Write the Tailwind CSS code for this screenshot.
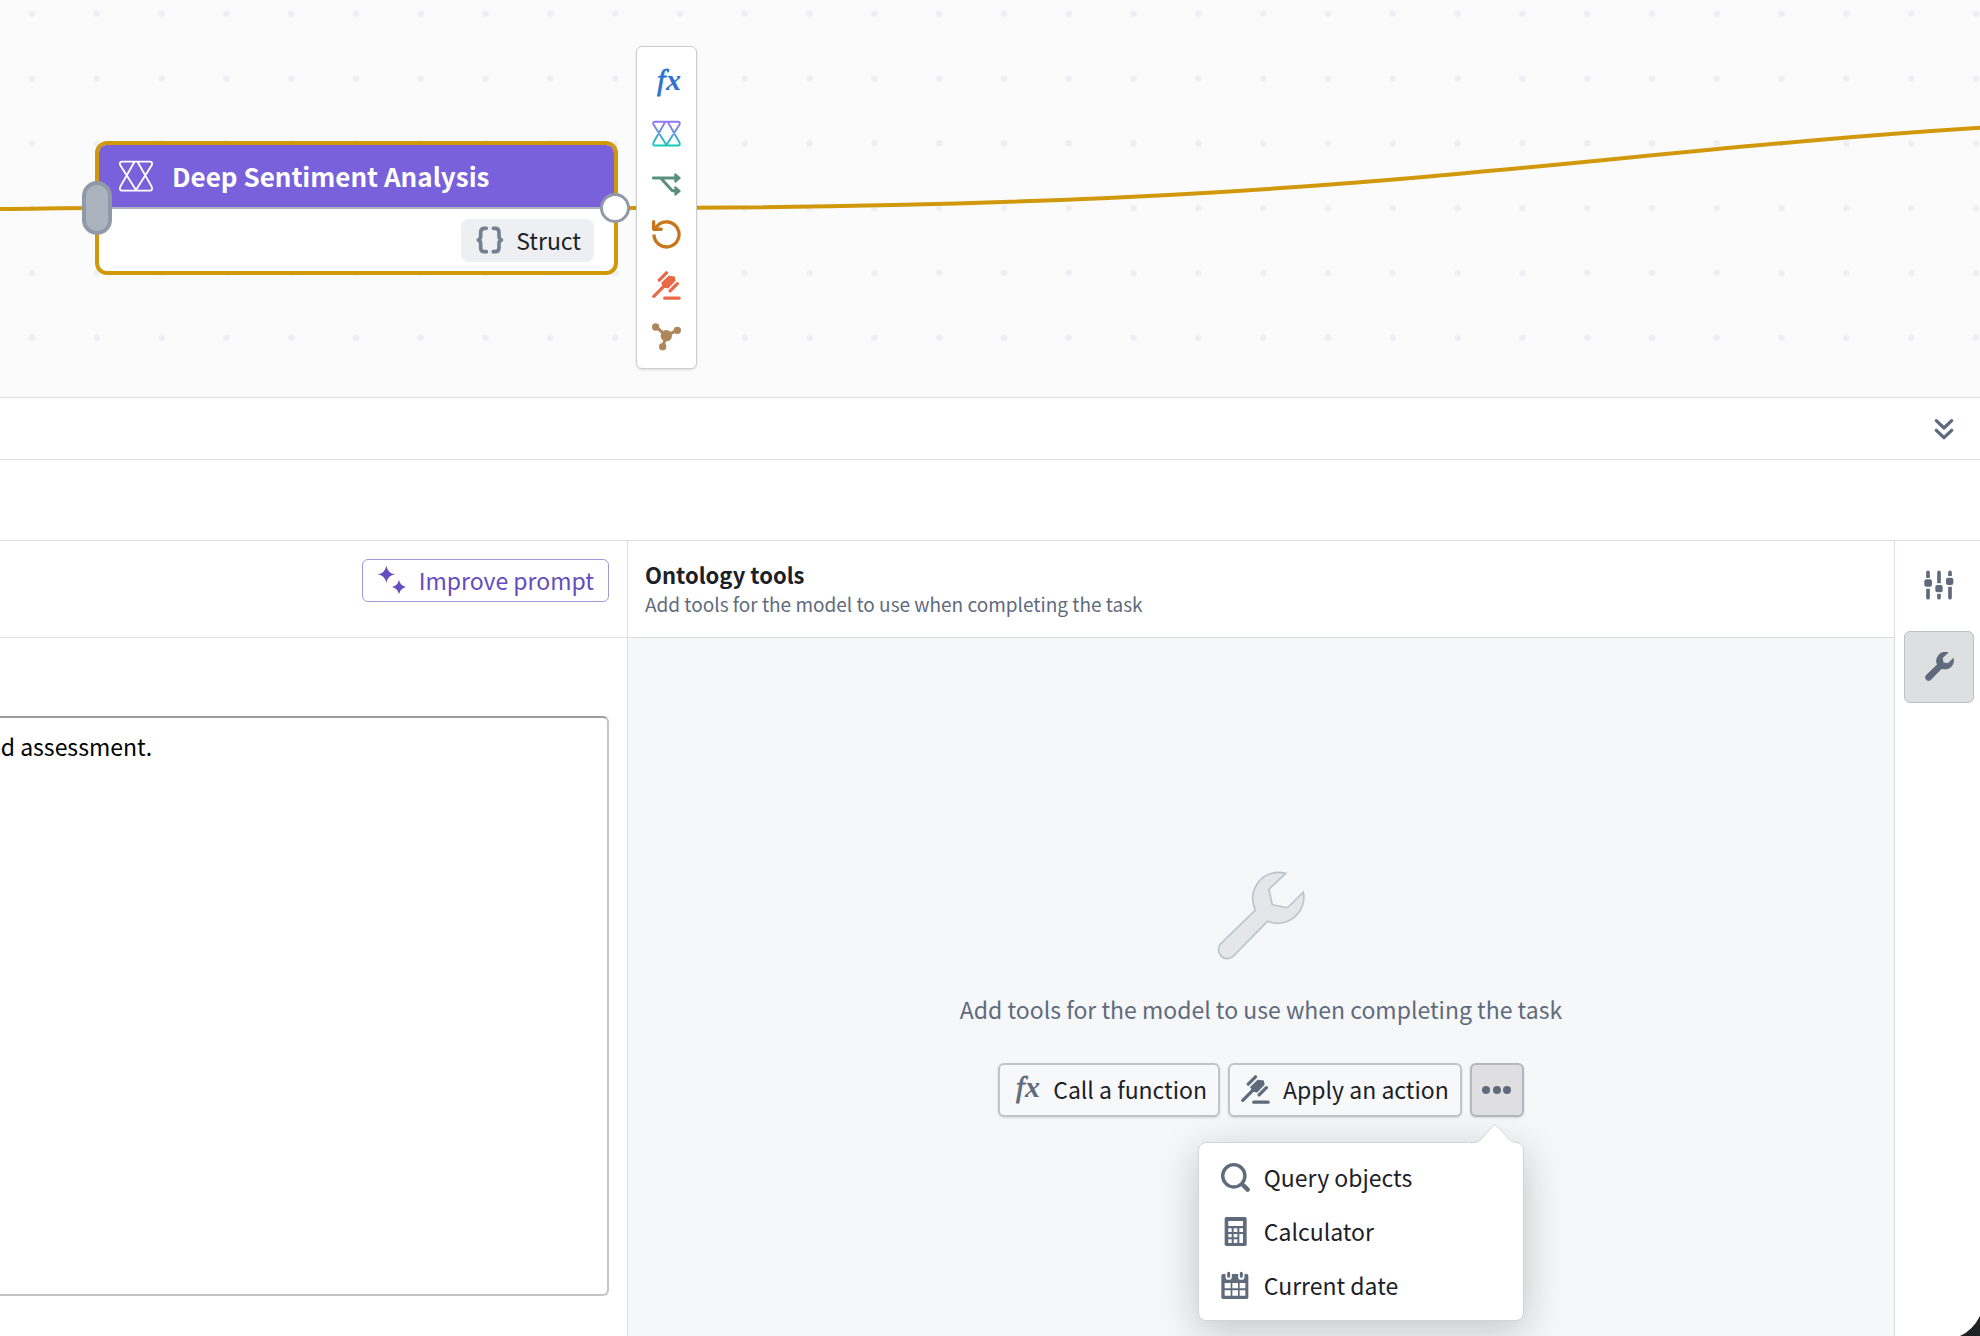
<!DOCTYPE html>
<html lang="en">
<head>
    <meta charset="UTF-8">
    <meta name="viewport" content="width=device-width, initial-scale=1.0">
    <title>Deep Sentiment Analysis</title>
    <script src="https://cdn.jsdelivr.net/npm/@tailwindcss/browser@4"></script>
</head>
<body class="bg-white font-['Noto_Sans_CJK_SC',sans-serif] text-[23px] leading-8 text-[#1c2127]">

    <!-- Shared icons -->
    <svg class="hidden" aria-hidden="true">
        <symbol id="icon-fx" viewBox="0 0 29 29">
            <text y="22" fill="currentColor" class="font-['Liberation_Serif',serif] text-[30px] italic"><tspan x="5" stroke="currentColor" stroke-width="0.8">f</tspan><tspan x="14" class="font-bold">x</tspan></text>
        </symbol>
        <symbol id="icon-llm" viewBox="175 123 106 96">
            <path d="M223 129L181 203Q176 215 187 215H269Q280 215 275 203L233 129M228 213L181 139Q176 128 187 128H269Q280 128 275 139L228 213" fill="none"/>
        </symbol>
        <symbol id="icon-action" viewBox="0 0 16 16">
            <g fill="none" stroke="currentColor" stroke-width="1.8" stroke-linecap="round">
                <path d="M4 5L8 1M10 11L14 7M7 15H15M1 14L8 7"/>
            </g>
            <path d="M5 6.6L9.2 2.6L12.6 3L13 5.4L9 9.6L6.4 9.2Z" fill="currentColor"/>
        </symbol>
        <symbol id="icon-wrench" viewBox="107 60 272 272">
            <path d="M318 67A79 79 0 0 0 226 178L121 280A27 27 0 0 0 158 319L263 212A79 79 0 0 0 371 124L323 171L277 162L267 115Z"/>
        </symbol>
    </svg>

    <main class="relative flex min-h-screen flex-col overflow-hidden">

        <!-- Graph canvas -->
        <section class="relative h-[398px] shrink-0 overflow-hidden border-b border-[#dcdde5] bg-[#fbfbfb]">
            <svg class="absolute inset-0 h-full w-full" aria-hidden="true">
                <defs>
                    <pattern id="dots" width="64.8" height="64.8" patternUnits="userSpaceOnUse" x="-0.4" y="-18.6">
                        <circle cx="32.4" cy="32.4" r="3.2" fill="#eeeff2"/>
                    </pattern>
                </defs>
                <rect width="100%" height="100%" fill="url(#dots)"/>
                <path d="M-10 209C30 209 60 208 97 208M615 208C1615 208 1615 110 2615 110" fill="none" stroke="#d1980b" stroke-width="4"/>
            </svg>

            <!-- Node -->
            <div class="absolute left-[95px] top-[141px] w-[523px] rounded-xl border-4 border-[#d1980b] bg-white">
                <div class="flex h-16 items-center gap-[18px] rounded-t-lg border-b-2 border-[#abb3bf] bg-[#7961db] pl-[19px] text-white">
                    <svg class="h-8 w-9 stroke-white" stroke-width="5.5"><use href="#icon-llm"/></svg>
                    <h1 class="text-[26px] font-bold">Deep Sentiment Analysis</h1>
                </div>
                <div class="flex justify-end px-5 pt-[10px] pb-[9px]">
                    <div class="flex h-[43px] items-center gap-3 rounded-lg bg-[#edeff2] px-[15px] pr-[13px] pb-0.5">
                        <svg class="size-7" viewBox="228 321 84 84" fill="none" stroke="#738091" stroke-width="11" stroke-linecap="round" stroke-linejoin="round">
                            <path d="M259 328H254Q242 328 242 340V352Q242 360 235 363Q242 366 242 374V386Q242 398 254 398H259M280 328H285Q297 328 297 340V352Q297 360 304 363Q297 366 297 374V386Q297 398 285 398H280"/>
                        </svg>
                        <span>Struct</span>
                    </div>
                </div>
            </div>
            <div class="absolute left-[82px] top-[181px] h-[54px] w-[30px] rounded-full border-4 border-[#8f99a8] bg-[#abb3bf]"></div>
            <div class="absolute left-[600px] top-[193px] size-[30px] rounded-full border-[3px] border-[#8f99a8] bg-white"></div>

            <!-- Node palette -->
            <div class="absolute left-[636px] top-[46px] flex h-[323px] w-[61px] flex-col items-center justify-between rounded-md border border-[#cdced1] bg-white pt-[21px] pb-[17px] shadow-sm">
                <button class="text-[#2d72d2]" aria-label="Function"><svg class="size-[29px]"><use href="#icon-fx"/></svg></button>
                <button aria-label="Use LLM">
                    <svg class="size-[29px]" stroke="url(#llm-gradient)" stroke-width="7" viewBox="0 0 29 29">
                        <defs>
                            <linearGradient id="llm-gradient" x1="0" y1="0" x2="0" y2="1">
                                <stop offset="0.1" stop-color="#9179f2"/>
                                <stop offset="1" stop-color="#13c9ba"/>
                            </linearGradient>
                        </defs>
                        <use href="#icon-llm"/>
                    </svg>
                </button>
                <button aria-label="Branch">
                    <svg class="size-[29px]" viewBox="99 422 87 87" fill="none" stroke="#5a8f7b" stroke-width="9" stroke-linecap="round" stroke-linejoin="round">
                        <path d="M103 446H170M125 446L160 484H170"/>
                        <path d="M169 435L182 446L169 457ZM169 474L182 485L169 496Z" fill="#5a8f7b" stroke-width="6"/>
                    </svg>
                </button>
                <button aria-label="Loop">
                    <svg class="size-[29px]" viewBox="99 569 88 88" fill="none" stroke="#c87619" stroke-width="10" stroke-linecap="round" stroke-linejoin="round">
                        <path d="M106 596L116 586A38 38 0 1 1 105 613" stroke-linecap="butt"/>
                        <path d="M104 574V597H127"/>
                    </svg>
                </button>
                <button class="text-[#eb6847]" aria-label="Action"><svg class="size-[29px]"><use href="#icon-action"/></svg></button>
                <button aria-label="Graph">
                    <svg class="size-[29px]" viewBox="99 874 87 87" fill="#af855a" stroke="#af855a" stroke-width="9">
                        <path d="M110 888L142 915L174 899M142 915L131 948" fill="none"/>
                        <g stroke="none">
                            <circle cx="142" cy="915" r="17"/>
                            <circle cx="110" cy="889" r="11"/>
                            <circle cx="175" cy="899" r="11"/>
                            <circle cx="131" cy="948" r="11"/>
                        </g>
                    </svg>
                </button>
            </div>
        </section>

        <!-- Panel header -->
        <div class="flex h-[62px] shrink-0 items-center justify-end border-b border-[#dcdde5] pr-[22px]">
            <button aria-label="Collapse panel">
                <svg class="size-7" viewBox="151 105 84 84" fill="none" stroke="#5f6b7c" stroke-width="10" stroke-linecap="round" stroke-linejoin="round">
                    <path d="M170 122L193 144L216 122M170 151L193 173L216 151"/>
                </svg>
            </button>
        </div>
        <div class="h-[81px] shrink-0 border-b border-[#dcdde5]"></div>

        <div class="flex flex-1">
            <!-- Prompt -->
            <section class="flex w-[628px] shrink-0 flex-col border-r border-[#dcdde5]">
                <header class="flex h-[97px] items-start justify-end border-b border-[#dcdde5] pt-[18px] pr-[18px]">
                    <button class="flex h-[43px] items-center gap-3 rounded-md border border-[#a197db] px-[14px] pb-0.5 text-[#634dbf]">
                        <svg class="size-[30px]" viewBox="113 107 90 90" fill="currentColor">
                            <path d="M141 109Q145 131 167 135Q145 139 141 161Q137 139 115 135Q137 131 141 109ZM179 152Q183 169 200 173Q183 177 179 194Q175 177 158 173Q175 169 179 152Z"/>
                        </svg>
                        Improve prompt
                    </button>
                </header>
                <div class="flex pt-[78px] pr-[18px]">
                    <textarea class="-ml-[26px] block h-[580px] flex-1 resize-none rounded-md border-2 border-[#c4c4c4] border-t-[#9c9c9c] bg-white px-3 py-3 text-black outline-none" aria-label="Task prompt">ed assessment.</textarea>
                </div>
            </section>

            <!-- Tools -->
            <section class="flex min-w-0 flex-1 flex-col">
                <header class="h-[97px] border-b border-[#dcdde5] px-[17px] pt-[17px]">
                    <h2 class="text-[22px] font-bold">Ontology tools</h2>
                    <p class="text-[19px] leading-7 text-[#5f6b7c]">Add tools for the model to use when completing the task</p>
                </header>
                <div class="flex flex-1 flex-col items-center bg-[#f6f7f9] pt-[233px]">
                    <svg class="size-[90px] fill-[#e5e6ea] stroke-[#bcc3cd]" stroke-width="5"><use href="#icon-wrench"/></svg>
                    <p class="mt-8 text-[#5f6b7c]">Add tools for the model to use when completing the task</p>
                    <div class="mt-[38px] flex gap-2">
                        <button class="flex h-[54px] items-center gap-[13px] rounded-md border-2 border-[#c2c4ca] bg-[#f7f8fa] px-[11px] pb-0.5 shadow-sm">
                            <svg class="size-[29px] text-[#5f6b7c]"><use href="#icon-fx"/></svg>
                            Call a function
                        </button>
                        <button class="flex h-[54px] items-center gap-[13px] rounded-md border-2 border-[#c2c4ca] bg-[#f7f8fa] px-[11px] pb-0.5 shadow-sm">
                            <svg class="size-[29px] text-[#5f6b7c]"><use href="#icon-action"/></svg>
                            Apply an action
                        </button>
                        <div class="relative">
                            <button class="flex h-[54px] w-[54px] items-center justify-center rounded-md border-2 border-[#b6b7be] bg-[#dfdfe2] shadow-sm" aria-label="More tools">
                                <svg class="size-[29px]" viewBox="0 0 29 29" fill="#5f6b7c">
                                    <circle cx="4" cy="14" r="4"/><circle cx="15" cy="14" r="4"/><circle cx="25" cy="14" r="4"/>
                                </svg>
                            </button>
                            <ul class="absolute top-[79px] right-0 w-[326px] rounded-lg border border-[#d3d4d6] bg-white pt-[7px] pb-2 shadow-[0_10px_40px_rgba(17,20,24,0.22)]">
                                <li class="absolute -top-5 right-1 h-[21px] w-12" aria-hidden="true">
                                    <svg class="h-[21px] w-12" viewBox="0 0 48 21">
                                        <path d="M2 20Q8 20 11 16L21 4Q24 1 27 4L37 14Q43 20 47 21H2Z" fill="#fff"/>
                                        <path d="M0 20Q6 20 10 16L21 4Q24 0 27 4L38 16Q41 19 46 20" fill="none" stroke="#d3d4d6"/>
                                    </svg>
                                </li>
                                <li><button class="flex h-[54px] w-full items-center gap-[14px] px-[22px]">
                                    <svg class="size-[29px]" viewBox="122 161 86 86" fill="none" stroke="#5f6b7c" stroke-linecap="round">
                                        <circle cx="160" cy="199" r="33" stroke-width="10"/>
                                        <path d="M188 227L201 240" stroke-width="13"/>
                                    </svg>
                                    Query objects
                                </button></li>
                                <li><button class="flex h-[54px] w-full items-center gap-[14px] px-[22px]">
                                    <svg class="size-[29px]" viewBox="122 323 87 87">
                                        <rect x="133" y="323" width="66" height="87" rx="5" fill="#5f6b7c"/>
                                        <path d="M144 335H188V350H144ZM144 357H154V368H144ZM160 357H171V368H160ZM177 357H188V368H177ZM144 374H154V384H144ZM160 374H171V384H160ZM177 374H188V401H177ZM144 390H154V401H144ZM160 390H171V401H160Z" fill="#fff"/>
                                    </svg>
                                    Calculator
                                </button></li>
                                <li><button class="flex h-[54px] w-full items-center gap-[14px] px-[22px]">
                                    <svg class="size-[29px]" viewBox="122 483 87 87">
                                        <rect x="123" y="492" width="81" height="75" rx="5" fill="#5f6b7c"/>
                                        <path d="M133 519H151V535H133ZM156 519H173V535H156ZM178 519H195V535H178ZM133 541H151V557H133ZM156 541H173V557H156ZM178 541H195V557H178Z" fill="#fff"/>
                                        <path d="M145 488V500M183 488V500" stroke="#fff" stroke-width="19" stroke-linecap="round"/>
                                        <path d="M145 490V499M183 490V499" stroke="#5f6b7c" stroke-width="9" stroke-linecap="round"/>
                                    </svg>
                                    Current date
                                </button></li>
                            </ul>
                        </div>
                    </div>
                </div>
            </section>

            <!-- Side rail -->
            <nav class="flex w-[86px] shrink-0 flex-col items-center gap-2.5 border-l border-[#dcdde5] pt-2 pl-[3px]">
                <button class="flex h-[72px] w-[70px] items-center justify-center" aria-label="Settings">
                    <svg class="size-[30px]" viewBox="133 571 90 90" fill="none" stroke="#5f6b7c" stroke-width="11">
                        <path d="M145 578V654M178 578V654M211 578V654" stroke-linecap="round"/>
                        <path d="M145 595V627M178 611V643M211 589V621" stroke="#fff" stroke-width="13"/>
                        <g fill="#5f6b7c" stroke="none">
                            <rect x="134" y="599" width="23" height="22" rx="6"/>
                            <rect x="167" y="616" width="22" height="22" rx="6"/>
                            <rect x="199" y="594" width="22" height="22" rx="6"/>
                        </g>
                    </svg>
                </button>
                <button class="flex h-[72px] w-[70px] items-center justify-center rounded-md border border-[#bdc1c8] bg-[#dedfe1] pb-0.5" aria-label="Tools">
                    <svg class="size-[29px] fill-[#5f6b7c] stroke-[#5f6b7c]" stroke-width="10"><use href="#icon-wrench"/></svg>
                </button>
            </nav>
        </div>

        <svg class="absolute right-0 bottom-0 size-5" viewBox="0 0 20 20" aria-hidden="true"><path d="M0 20Q13 14 20 0V20Z" fill="#1e2222"/></svg>
    </main>
</body>
</html>
